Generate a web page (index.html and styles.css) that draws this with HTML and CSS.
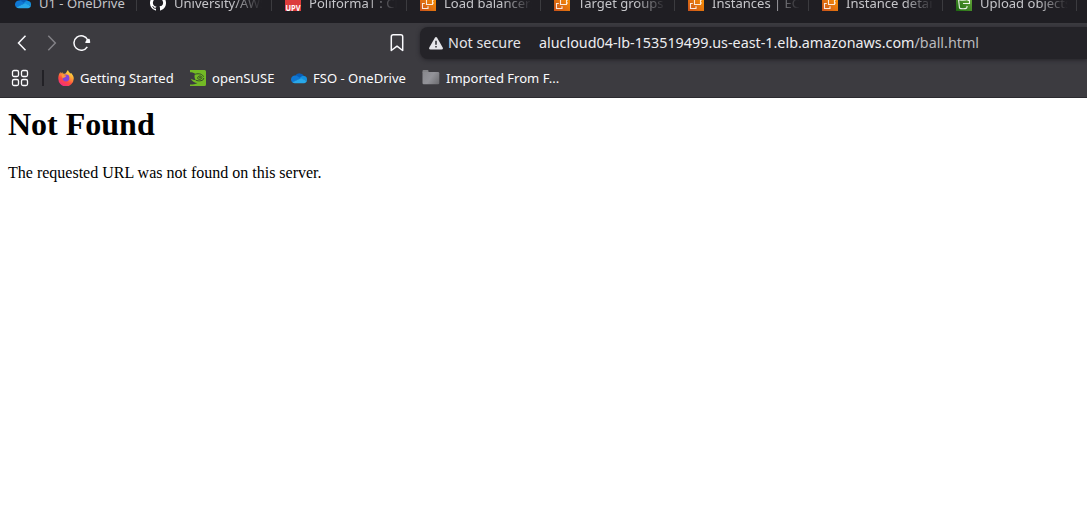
FILE: index.html
```html
<!DOCTYPE html>
<html lang="en">
<head>
<meta charset="utf-8">
<title>Not Found</title>
<link rel="stylesheet" href="styles.css">
</head>
<body>
<svg class="defs" width="0" height="0" aria-hidden="true">
  <defs>
    <linearGradient id="orange" x1="0" y1="1" x2="1" y2="0"><stop offset="0" stop-color="#c8511b"/><stop offset="1" stop-color="#ff9900"/></linearGradient>
    <linearGradient id="green" x1="0" y1="1" x2="1" y2="0"><stop offset="0" stop-color="#1b660f"/><stop offset="1" stop-color="#6cae3e"/></linearGradient>
    <linearGradient id="fox" x1=".8" y1="0" x2=".25" y2="1"><stop offset="0" stop-color="#fff044"/><stop offset=".35" stop-color="#ffa436"/><stop offset=".65" stop-color="#ff4b3e"/><stop offset="1" stop-color="#f0278a"/></linearGradient>
    <linearGradient id="gray" gradientUnits="userSpaceOnUse" x1="0" y1="2" x2="17" y2="14"><stop offset="0" stop-color="#88888d"/><stop offset=".5" stop-color="#939399"/><stop offset="1" stop-color="#6c6c70"/></linearGradient>
    <symbol id="cloud" viewBox="0 0 16 16">
      <path fill="#0a5fb8" d="M4.400 5.500A5 5 0 0 1 13 6.200L9 9.500Z"/>
      <path fill="#0f78d4" d="M0 9.500a3.900 3.900 0 0 1 4.500-4c1 .1 1.800.5 2.400.9l3.300 2.100-8.700 4A3.700 3.700 0 0 1 0 9.500Z"/>
      <path fill="#1490df" d="M9 7.700c1-1.300 2.400-1.800 4-1.600a3.400 3.400 0 0 1 3 3.500v1.300L10 8.900Z"/>
      <path fill="#28a8ea" d="M1.400 12.300 10 8.300l5.900 2.700a2.900 2.900 0 0 1-2.700 2.200H3.800a4 4 0 0 1-2.400-.9Z"/>
    </symbol>
    <symbol id="ec2" viewBox="0 0 16 16">
      <path fill="url(#orange)" d="M0 0h16v16H0z"/>
      <path fill="none" stroke="#fff" stroke-opacity=".85" stroke-width="1.100" d="M6.500 3.500h6v6h-6zM4.800 8.500H2.500v5H8v-2.200M12.500 5H14M12.500 8H14"/>
    </symbol>
    <symbol id="s3" viewBox="0 0 16 16">
      <path fill="url(#green)" d="M0 0h16v16H0z"/>
      <path fill="none" stroke="#fff" stroke-opacity=".9" stroke-width="1.100" d="M2.500 4c0-1.600 9-1.600 9 0s-9 1.600-9 0l1 9c1 1 6 1 7.200 0l.5-2M7 8.500h6.500V5.500h-2"/>
    </symbol>
    <symbol id="github" viewBox="0 0 16 16"><path fill="#fff" d="M8 0a8 8 0 0 0-2.500 15.600c.4.1.5-.2.5-.4V13.700c-2.200.5-2.700-.9-2.700-.9-.4-.9-.9-1.200-.9-1.200-.7-.5.1-.5.1-.5.8.1 1.200.8 1.200.8.7 1.200 1.900.9 2.300.7.1-.5.3-.9.5-1.100-1.800-.2-3.600-.9-3.600-4 0-.9.3-1.600.8-2.100-.1-.2-.4-1 .1-2.100 0 0 .7-.2 2.200.8a7.500 7.500 0 0 1 4 0c1.500-1 2.200-.8 2.200-.8.4 1.100.2 1.900.1 2.100.5.600.8 1.300.8 2.100 0 3.100-1.900 3.700-3.700 3.900.3.300.6.800.6 1.500v2.300c0 .2.100.5.500.4A8 8 0 0 0 8 0Z"/></symbol>
  </defs>
</svg>
<header class="browser">
  <div class="tabs">
    <div class="tab wide"><svg class="favicon"><use href="#cloud"/></svg><span class="tab-title">U1 - OneDrive</span></div>
    <div class="tab wide"><svg class="favicon"><use href="#github"/></svg><span class="tab-title fade">University/AWS</span></div>
    <div class="tab wide"><svg class="favicon" viewBox="0 0 16 16"><path fill="#dc3c3c" d="M0 0h16v16H0z"/><text class="upv" x="8" y="15.500" text-anchor="middle" textLength="15" lengthAdjust="spacingAndGlyphs">UPV</text></svg><span class="tab-title fade">PoliformaT : CLO</span></div>
    <div class="tab"><svg class="favicon"><use href="#ec2"/></svg><span class="tab-title fade">Load balancers</span></div>
    <div class="tab"><svg class="favicon"><use href="#ec2"/></svg><span class="tab-title fade">Target groups |</span></div>
    <div class="tab"><svg class="favicon"><use href="#ec2"/></svg><span class="tab-title fade">Instances | EC2</span></div>
    <div class="tab"><svg class="favicon"><use href="#ec2"/></svg><span class="tab-title fade">Instance details</span></div>
    <div class="tab"><svg class="favicon"><use href="#s3"/></svg><span class="tab-title fade">Upload objects</span></div>
  </div>
  <nav class="toolbar">
    <svg class="back" width="16" height="16" viewBox="0 0 16 16"><path d="M11.500.8 4.500 8l7 7.200"/></svg>
    <svg class="forward" width="16" height="16" viewBox="0 0 16 16"><path d="m4.300.8 7 7.200-7 7.200"/></svg>
    <svg class="reload" width="18" height="16" viewBox="0 0 18 16"><path d="M14.300 11.800A7.200 7.200 0 1 1 14.700 5"/><path class="solid" d="M13 7.300 16.500 7.300 16 4.500 14 5.500Z"/></svg>
    <svg class="save" width="14" height="18" viewBox="0 0 14 18"><path d="M1.300 16.500V2.700q0-1.900 1.900-1.900h7.600q1.900 0 1.900 1.900v13.800L7 12.200Z"/></svg>
    <div class="address">
      <svg class="warning" width="14" height="13" viewBox="0 0 14 13"><path fill="#e5e5e9" d="M5.900.8q1.100-1.500 2.200 0l5.600 9.800q.8 1.900-1.200 1.900h-11q-2 0-1.200-1.900Z"/><path stroke="#29292e" stroke-width="1.500" d="M7 3.800v4M7 9v1.500"/></svg>
      <span class="security">Not secure</span>
      <span class="url">alucloud04-lb-153519499.us-east-1.elb.amazonaws.com<span class="path">/ball.html</span></span>
    </div>
  </nav>
  <div class="bookmarks">
    <svg class="apps" width="18" height="18" viewBox="0 0 18 18"><rect x="1.500" y="1.500" width="6" height="6" rx="1.500"/><rect x="10.500" y="1.500" width="6" height="6" rx="1.500"/><rect x="1.500" y="10.500" width="6" height="6" rx="1.500"/><rect x="10.500" y="10.500" width="6" height="6" rx="1.500"/></svg>
    <span class="divider"></span>
    <a class="bookmark started"><svg class="favicon" viewBox="0 0 16 16"><path fill="url(#fox)" d="M10 0c.2 1.700 1.600 2.300 2.500 3.500l.7-.6C15 5 16 7 15.700 9A7.700 7.700 0 0 1 .3 8.500C.2 6 1 3.800 2.500 2l.4 1.800L4.200 2l.5 1.500 2.300.3C8.700 3 8.500 1.200 10 0Z"/><circle cx="8" cy="8" r="3.400" fill="#8245d9"/><path fill="#ff9a38" d="M3.500 4.500 8.500 5.700 7 7.300Q5.500 7.500 4.600 8.500Z"/></svg><span>Getting Started</span></a>
    <a class="bookmark suse"><svg class="favicon" viewBox="0 0 16 16"><path fill="#73ba25" d="M0 0h14.500Q16 0 16 1.500v13q0 1.500-1.500 1.500H0v-1.500c3 0 5.500-.2 7.500-1.500C4.500 13 2 11.500.8 8.800c1.700.8 3 1.200 4.700 1.200C4.500 8 4 6 5.200 3.800 3.500 2.500 1.500 2.300 0 2.300Z"/><path fill="none" stroke="#344b27" stroke-width="1" d="M5.200 4.200c4-1.200 7.500.2 8.300 2.500M13.700 8c.3 3-5 3.500-8 2.200M12 7.700c-.2-2.400-4.300-2.200-4.300.2 0 2 3.300 2 4.300 0"/><circle cx="10" cy="7.600" r=".8" fill="#344b27"/></svg><span>openSUSE</span></a>
    <a class="bookmark fso"><svg class="favicon"><use href="#cloud"/></svg><span>FSO - OneDrive</span></a>
    <a class="bookmark imported"><svg class="folder" width="18" height="16" viewBox="0 0 18 16"><path fill="#838387" d="M.5 2.500V1q0-1 1-1h4q1 0 1 1v1.500Z"/><path fill="url(#gray)" d="M.5 2h15.500q1.300 0 1.300 1.300V13q0 1.200-1.300 1.200H1.700Q.5 14.200.5 13Z"/></svg><span>Imported From F...</span></a>
  </div>
</header>
<main class="page">
  <h1>Not Found</h1>
  <p>The requested URL was not found on this server.</p>
</main>
</body>
</html>
```
FILE: styles.css
```css
* { box-sizing: border-box; }
body { margin: 0; background: #fff; overflow: hidden; }
.defs { display: block; }
.browser { height: 98px; background: #3c3b40; border-bottom: 1px solid #2b2a2f; color: #fbfbfe; font-family: "Noto Sans", sans-serif; font-size: 13.04px; }
.tabs { display: flex; height: 23px; padding-left: 2px; background: #1f1e23; overflow: hidden; }
.tab { display: flex; align-items: center; flex: none; width: 134px; height: 38px; margin-top: -16px; padding-left: 13px; gap: 8px; border-right: 1px solid #39393d; border-image: linear-gradient(to bottom, #3b3b3f 27px, transparent 27px) 1; }
.wide { width: 135px; }
.favicon { display: block; flex: none; width: 16px; height: 16px; }
.tab-title { width: 89px; overflow: hidden; white-space: nowrap; line-height: 20px; color: #c5c5c9; }
.fade { mask-image: linear-gradient(to right, #000 58px, transparent 88px); }
.upv { font: bold 9px "Open Sans", sans-serif; fill: #fff; }
.toolbar { display: flex; align-items: center; height: 40px; padding-left: 14px; }
.toolbar svg { flex: none; fill: none; stroke: #fbfbfe; stroke-width: 1.5; }
.toolbar .forward { margin-left: 14px; stroke: #838287; }
.toolbar .reload { margin-left: 13px; }
.reload .solid { fill: #fbfbfe; stroke-linejoin: round; }
.toolbar .save { margin-left: 299px; stroke-linejoin: round; }
.address { display: flex; align-items: center; flex: 1; height: 32px; margin-left: 16px; padding-left: 9px; border-radius: 8px 0 0 8px; background: #242328; box-shadow: 0 1px 4px #242328; font-size: 14.33px; line-height: 20px; white-space: nowrap; }
.toolbar .warning { stroke: none; }
.security { width: 91px; margin-left: 5px; padding-bottom: 1px; color: #e4e4e8; }
.url { padding-bottom: 1px; color: #ededf0; }
.path { color: #b9b9bd; }
.bookmarks { display: flex; align-items: center; height: 30px; padding-left: 11px; }
.apps { fill: none; stroke: #fbfbfe; stroke-width: 1.3; }
.divider { width: 2px; height: 16px; margin-left: 13px; background: #222126; }
.bookmark { display: flex; align-items: center; gap: 6px; white-space: nowrap; line-height: 20px; }
.started { width: 132px; margin-left: 14px; }
.suse { width: 101px; }
.fso { width: 131px; }
.page { padding: 8px; font-family: "Liberation Serif", serif; color: #000; }
.page h1 { margin: 0 0 21px; font-size: 32px; line-height: 37px; }
.page p { margin: 0; font-size: 16px; line-height: 18px; }
```
